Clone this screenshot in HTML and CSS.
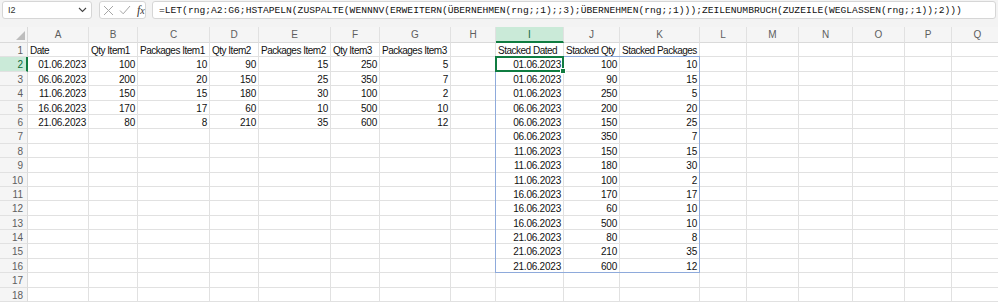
FILE: index.html
```html
<!DOCTYPE html>
<html lang="de">
<head>
    <meta charset="UTF-8">
    <meta name="viewport" content="width=device-width, initial-scale=1.0">
    <title>Mappe1</title>
    <link rel="stylesheet" href="styles.css">
</head>
<body>
    <div class="formula-bar">
        <div class="name-box">
            <span>I2</span>
            <svg width="9" height="6" viewBox="0 0 9 6"><path d="M1 1 L4.5 4.5 L8 1" fill="none" stroke="#444" stroke-width="1.1"/></svg>
        </div>
        <div class="fx-buttons">
            <svg width="11" height="11" viewBox="0 0 11 11"><path d="M1 1 L10 10 M10 1 L1 10" stroke="#a6a6a6" stroke-width="1"/></svg>
            <svg width="12" height="10" viewBox="0 0 12 10"><path d="M1 5.5 L4.2 8.8 L11 1" fill="none" stroke="#a6a6a6" stroke-width="1"/></svg>
            <span class="fx">f<span class="fx-x">x</span></span>
        </div>
        <div class="formula-input">=LET(rng;A2:G6;HSTAPELN(ZUSPALTE(WENNNV(ERWEITERN(ÜBERNEHMEN(rng;;1);;3);ÜBERNEHMEN(rng;;1)));ZEILENUMBRUCH(ZUZEILE(WEGLASSEN(rng;;1));2)))</div>
    </div>

    <div class="sheet" id="sheet">
        <!-- cells are generated below -->
    </div>

    <script>
        const columns = ['A', 'B', 'C', 'D', 'E', 'F', 'G', 'H', 'I', 'J', 'K', 'L', 'M', 'N', 'O', 'P', 'Q'];

        // values for columns A..K, by row
        const data = {
            1: ['Date', 'Qty Item1', 'Packages Item1', 'Qty Item2', 'Packages Item2', 'Qty Item3', 'Packages Item3', '', 'Stacked Dated', 'Stacked Qty', 'Stacked Packages'],
            2: ['01.06.2023', '100', '10', '90', '15', '250', '5', '', '01.06.2023', '100', '10'],
            3: ['06.06.2023', '200', '20', '150', '25', '350', '7', '', '01.06.2023', '90', '15'],
            4: ['11.06.2023', '150', '15', '180', '30', '100', '2', '', '01.06.2023', '250', '5'],
            5: ['16.06.2023', '170', '17', '60', '10', '500', '10', '', '06.06.2023', '200', '20'],
            6: ['21.06.2023', '80', '8', '210', '35', '600', '12', '', '06.06.2023', '150', '25'],
            7: ['', '', '', '', '', '', '', '', '06.06.2023', '350', '7'],
            8: ['', '', '', '', '', '', '', '', '11.06.2023', '150', '15'],
            9: ['', '', '', '', '', '', '', '', '11.06.2023', '180', '30'],
            10: ['', '', '', '', '', '', '', '', '11.06.2023', '100', '2'],
            11: ['', '', '', '', '', '', '', '', '16.06.2023', '170', '17'],
            12: ['', '', '', '', '', '', '', '', '16.06.2023', '60', '10'],
            13: ['', '', '', '', '', '', '', '', '16.06.2023', '500', '10'],
            14: ['', '', '', '', '', '', '', '', '21.06.2023', '80', '8'],
            15: ['', '', '', '', '', '', '', '', '21.06.2023', '210', '35'],
            16: ['', '', '', '', '', '', '', '', '21.06.2023', '600', '12']
        };

        const sheet = document.getElementById('sheet');

        function addDiv(className, text) {
            const div = document.createElement('div');
            div.className = className;
            if (text) div.textContent = text;
            sheet.appendChild(div);
            return div;
        }

        const corner = addDiv('corner');
        corner.innerHTML = '<svg width="9" height="9" viewBox="0 0 9 9"><path d="M9 0 L9 9 L0 9 Z" fill="#bdbdbd"/></svg>';

        for (const col of columns) {
            addDiv(col === 'I' ? 'col-head selected' : 'col-head', col);
        }

        for (let r = 1; r <= 18; r++) {
            addDiv(r === 2 ? 'row-head selected' : 'row-head', String(r));
            const values = data[r] || [];
            for (let c = 0; c < columns.length; c++) {
                const value = values[c] || '';
                let cls = 'cell';
                if (value !== '') {
                    cls += /^[0-9.]+$/.test(value) ? ' num' : ' text';
                }
                addDiv(cls, value);
            }
        }

        // spill range and active cell sit on top of the grid
        addDiv('spill');
        addDiv('active');
    </script>
</body>
</html>
```

FILE: styles.css
```css
body {
    margin: 0;
    background: #f3f3f3;
    font-family: "Liberation Sans", Arial, sans-serif;
    overflow: hidden;
}

/* formula bar */
.formula-bar {
    display: flex;
    align-items: flex-start;
    height: 27px;
    padding: 1px 2px 0 2px;
    box-sizing: border-box;
}
.name-box,
.fx-buttons,
.formula-input {
    height: 18px;
    box-sizing: border-box;
    background: #fff;
    border: 1px solid #d6d6d6;
    border-radius: 3px;
    display: flex;
    align-items: center;
}
.name-box {
    width: 90px;
    justify-content: space-between;
    padding: 0 4px 0 5px;
    font-size: 9px;
    color: #333;
}
.fx-buttons {
    width: 47px;
    margin-left: 7px;
    gap: 5px;
    padding-left: 3px;
}
.fx {
    font-family: "Liberation Serif", "Times New Roman", serif;
    font-style: italic;
    font-size: 12px;
    color: #333;
    margin-left: 1px;
}
.fx-x {
    font-size: 10px;
}
.formula-input {
    flex: 1;
    margin-left: 6px;
    padding-left: 6px;
    font-family: "Liberation Mono", "Courier New", monospace;
    font-size: 9.65px;
    color: #111;
    white-space: nowrap;
    overflow: hidden;
}

/* sheet grid */
.sheet {
    position: relative;
    display: grid;
    grid-template-columns: 28px 61px 49px 72px 49px 72px 49px 71px 45px 68px 56px 80px 47px 52px 54px 52px 47px 52px;
    grid-template-rows: 16px;
    grid-auto-rows: 14.4px;
    background: #fff;
    width: 1004px;
}
.corner {
    background: #f5f5f5;
    border-right: 1px solid #dadada;
    border-bottom: 1px solid #dadada;
    display: flex;
    align-items: flex-end;
    justify-content: flex-end;
    padding: 0 2px 2px 0;
}
.col-head {
    background: #f5f5f5;
    color: #5e5e5e;
    font-size: 10px;
    line-height: 16px;
    text-align: center;
    border-right: 1px solid #e1e1e1;
    border-bottom: 1px solid #dadada;
    box-sizing: border-box;
}
.col-head.selected {
    background: #caead8;
    color: #0f6b38;
    border-bottom: 2px solid #107c41;
    line-height: 15px;
}
.row-head {
    background: #f5f5f5;
    color: #5e5e5e;
    font-size: 10px;
    line-height: 15px;
    text-align: right;
    padding-right: 4px;
    border-right: 1px solid #dadada;
    border-bottom: 1px solid #e1e1e1;
    box-sizing: border-box;
}
.row-head.selected {
    background: #caead8;
    color: #0f6b38;
    border-right: 2px solid #107c41;
    padding-right: 3px;
}
.cell {
    border-right: 1px solid #e1e1e1;
    border-bottom: 1px solid #e1e1e1;
    box-sizing: border-box;
    padding: 0 2px;
    font-size: 10px;
    line-height: 15px;
    color: #111;
    white-space: nowrap;
}
.num {
    text-align: right;
    letter-spacing: -0.22px;
}
.text {
    letter-spacing: -0.5px;
}

/* spill range I2:K16, laid over the cells */
.spill {
    position: absolute;
    grid-column: 10 / 13;
    grid-row: 3 / 18;
    top: -1px;
    left: -1px;
    right: 0;
    bottom: 0;
    border: 1px solid #8eaadb;
    pointer-events: none;
}

/* active cell I2 */
.active {
    position: absolute;
    grid-column: 10 / 11;
    grid-row: 3 / 4;
    top: -1px;
    left: -1px;
    right: 0;
    bottom: 0;
    border: 2px solid #107c41;
    pointer-events: none;
}
.active::after {
    content: "";
    position: absolute;
    right: -4px;
    bottom: -4px;
    width: 4px;
    height: 4px;
    background: #107c41;
    border: 1px solid #fff;
}
```
